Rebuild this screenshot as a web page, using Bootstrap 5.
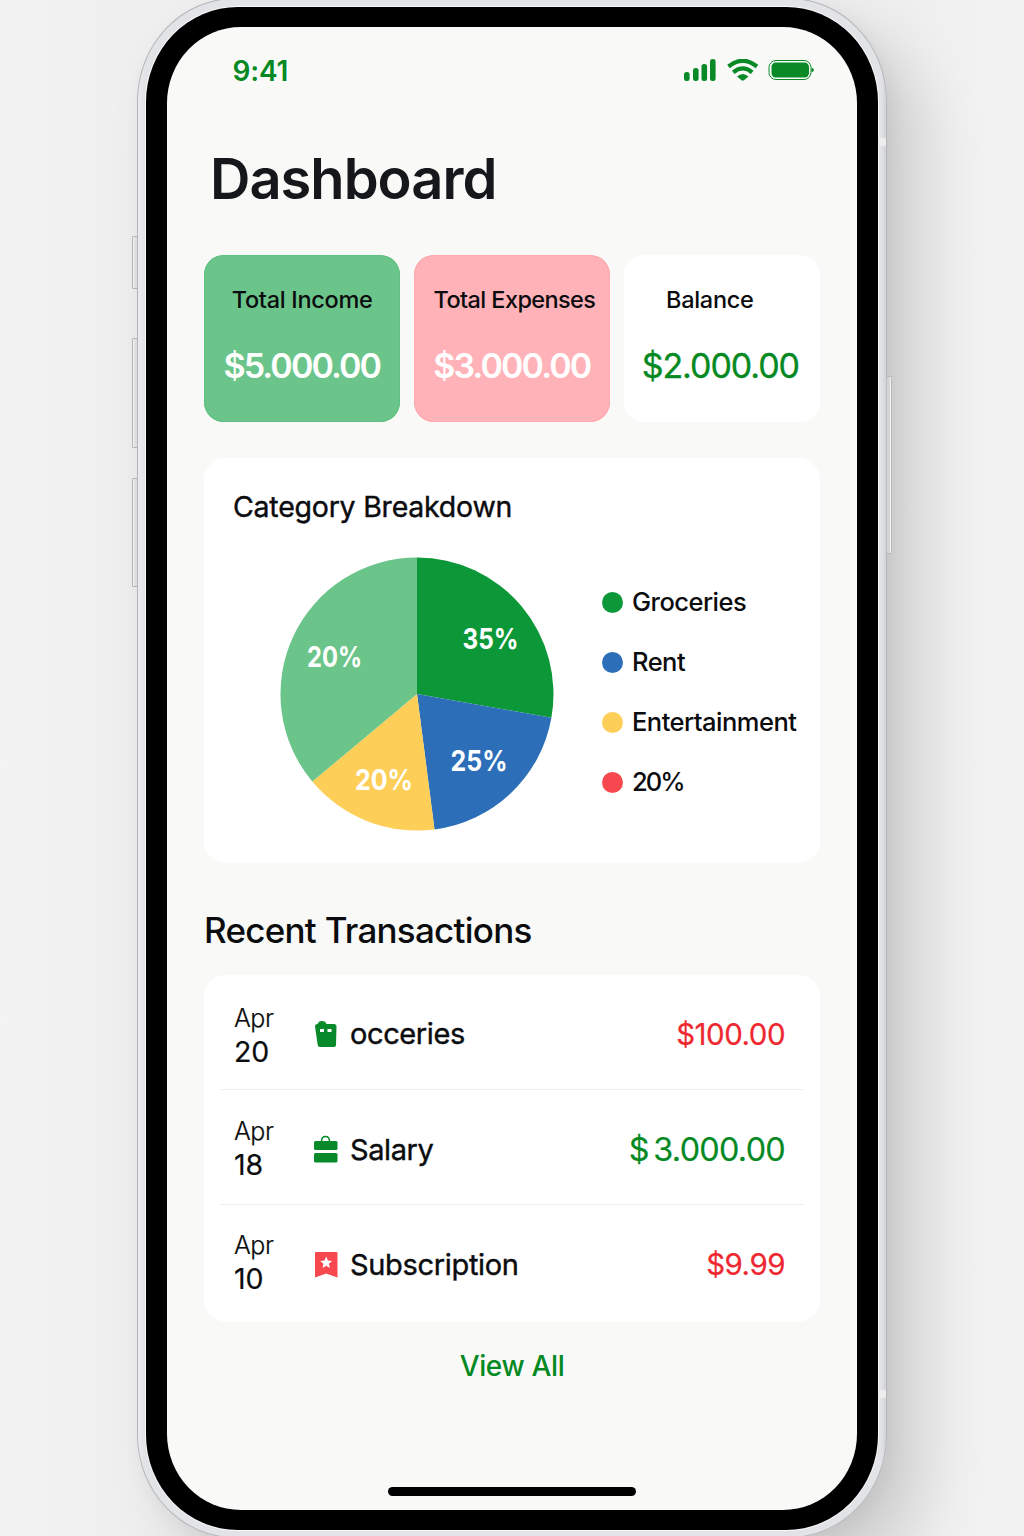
<!DOCTYPE html>
<html lang="en">
<head>
<meta charset="utf-8">
<meta name="viewport" content="width=device-width, initial-scale=1">
<title>Dashboard</title>
<link href="https://cdn.jsdelivr.net/npm/bootstrap@5.3.0/dist/css/bootstrap.min.css" rel="stylesheet">
<style>
  :root { --brand: #058923; --danger-ink: #ee2730; }
  body { width: 1024px; height: 1536px; font-family: Inter, "Liberation Sans", sans-serif; color: #0b0c0e;
    background: linear-gradient(90deg, #f3f3f3 0, #efefef 130px, #efefef 900px, #f3f3f3 100%); }
  .stage { height: 1536px; padding-left: 137px; }
  .phone { width: 750px; height: 1540px; margin-top: -2px; padding: 8px; border: 1px solid #b4b5b8;
    border-radius: 98px / 103px; background: linear-gradient(90deg, #ececee, #e2e3e6 7px, #e2e3e6 743px, #d3d4d7);
    box-shadow: 34px 34px 64px rgba(0,0,0,.15), 5px 6px 20px rgba(0,0,0,.05); }
  .bezel { height: 1523px; background: #000; border-radius: 92px / 95px; padding: 20px 21px; box-shadow: 0 0 0 1px #f8f8f9; }
  .screen { height: 1483px; border-radius: 74px / 76px; background: #f9faf8; padding: 0 37px; }
  .side-key { width: 6px; background: #e6e6e7; border: 1px solid #b9babb; border-radius: 1px; box-shadow: inset 1px 0 0 #f8f8f8; }
  .side-key.power { background: #d4d5d7; box-shadow: inset -1px 0 0 #f4f4f4; }
  .band { width: 8px; height: 8px; background: #eeeeef; }
  .status { height: 88.5px; padding: 0 5.5px 0 28.5px; }
  .clock { font-size: 28px; font-weight: 600; letter-spacing: -.2px; color: var(--brand); }
  .page-title { font-size: 56px; font-weight: 600; line-height: 68px; letter-spacing: -1px; color: #15171a; margin: 29.500px 0 42px 6px; }
  .stat { height: 167px; border-radius: 20px; padding-top: 29px; }
  .stat-label { font-size: 23.5px; font-weight: 500; line-height: 32px; letter-spacing: -.28px; }
  .stat-label.tight { letter-spacing: -.6px; padding-left: 5px; }
  .stat-sum { font-size: 34px; line-height: 44px; font-weight: 600; letter-spacing: -1.9px; margin-top: 28px; padding-left: 19.5px; }
  .stat-sum.plain { font-weight: 400; letter-spacing: -1.05px; padding-left: 18px; -webkit-text-stroke: .3px; }
  .panel { background: #fff; border-radius: 22px; }
  .stats { gap: 13.5px; }
  .income { background: #6bc58a; box-shadow: inset 0 0 0 1px #5fc181; }
  .expense { background: #ffb2b8; box-shadow: inset 0 0 0 1px #ffa8af; }
  .breakdown { height: 405.5px; margin-top: 35.5px; padding: 30px 20px 0 29px; }
  .breakdown-title { font-size: 28.5px; font-weight: 400; -webkit-text-stroke: .4px; line-height: 38px; letter-spacing: -.23px; margin: 0; }
  .pie { margin: 31px 0 0 47px; }
  .pie text { font-size: 28.5px; font-weight: 700; fill: #fff; }
  .legend-list { margin-top: 46.5px; width: 198px; }
  .legend-list li { height: 60px; gap: 9px; font-size: 25.5px; font-weight: 500; letter-spacing: -.52px; }
  .legend-list li:last-child { letter-spacing: -2px; }
  .dot { width: 21px; height: 21px; }
  .recent-title { font-size: 35px; font-weight: 500; line-height: 44px; letter-spacing: -.74px; margin: 45px 0 23px; }
  .entries { height: 346.5px; padding: 0 16px; }
  .entry { height: 115px; padding: 4px 19px 0 14px; border-bottom: 1.5px solid #eeeeee; }
  .entry:last-child { border: 0; }
  .entry-date { width: 79px; line-height: 33px; font-size: 28.5px; letter-spacing: -.2px; -webkit-text-stroke: .2px; padding-top: 1px; }
  .entry:nth-child(2) .entry-date { padding: 0 0 2px; }
  .entry:nth-child(3) .entry-date { padding: 0 0 6px; }
  .entry:nth-child(2) .entry-name, .entry:nth-child(2) .entry-sum { padding-top: 2px; }
  .entry-date small { font-size: 25px; font-weight: 300; display: block; letter-spacing: -.5px; }
  .entry-icon { width: 26px; height: 28px; }
  .entry-name { font-size: 29px; margin-left: 11px; -webkit-text-stroke: .4px; letter-spacing: -.4px; }
  .entry-name.long { letter-spacing: -.33px; }
  .entry-sum { font-size: 29.5px; letter-spacing: -.5px; -webkit-text-stroke: .2px; }
  .entry-sum.wide { font-size: 32.3px; letter-spacing: -.7px; }
  .ink-brand { color: var(--brand); } .ink-danger { color: var(--danger-ink); }
  .view-all { font-size: 28px; font-weight: 500; line-height: 38px; letter-spacing: -.35px; color: var(--brand); margin-top: 25px; }
  .home-bar { width: 248px; height: 9px; border-radius: 5px; background: #000; margin: 102px auto 0; }
</style>
</head>
<body>
<div class="stage position-relative overflow-hidden">
  <i class="side-key position-absolute" style="left:132px;top:236px;height:53px"></i>
  <i class="side-key position-absolute" style="left:132px;top:338px;height:110px"></i>
  <i class="side-key position-absolute" style="left:132px;top:478px;height:109px"></i>
  <div class="phone position-relative">
    <i class="band position-absolute" style="right:0;top:139px"></i>
    <i class="band position-absolute" style="right:0;top:1391px"></i>
    <div class="bezel">
      <main class="screen d-flex flex-column">
        <header class="status d-flex justify-content-between align-items-center">
          <span class="clock">9:41</span>
          <svg width="132" height="24" viewBox="0 0 132 24" fill="#0a8a27">
            <rect x="1" y="13" width="5.600" height="9" rx="2.500"/><rect x="10" y="9" width="5.600" height="13" rx="2.500"/>
            <rect x="18.500" y="5" width="5.600" height="17" rx="2.500"/><rect x="27" y="0" width="5.600" height="22" rx="2.500"/>
            <g fill="none" stroke="#0a8a27" stroke-width="4.200"><path d="M45.500 7.500Q59.700 -4 74 7.500"/><path d="M50.300 13.300Q59.700 5.500 69.200 13.300"/></g>
            <path d="M54 17.500Q59.700 12.500 65.500 17.500L61 21.300Q59.700 22.200 58.500 21.300Z"/>
            <rect x="86" y="1.500" width="42" height="19" rx="7" fill="none" stroke="#0a8a27"/>
            <rect x="88.500" y="3.500" width="37.500" height="15" rx="4.500"/><path d="M128.500 8.500q5 2.500 0 5z"/>
          </svg>
        </header>
        <h1 class="page-title">Dashboard</h1>
        <section class="stats d-flex">
          <div class="stat income flex-fill w-100"><div class="stat-label text-center">Total Income</div><div class="stat-sum text-white">$5.000.00</div></div>
          <div class="stat expense flex-fill w-100"><div class="stat-label tight text-nowrap text-center">Total Expenses</div><div class="stat-sum text-white">$3.000.00</div></div>
          <div class="stat bg-white flex-fill w-100"><div class="stat-label text-center pe-4">Balance</div><div class="stat-sum plain ink-brand">$2.000.00</div></div>
        </section>
        <section class="panel breakdown">
          <h2 class="breakdown-title">Category Breakdown</h2>
          <div class="d-flex justify-content-between align-items-start">
            <svg class="pie" width="274" height="274" viewBox="-137 -137 274 274">
              <path fill="#0c9838" d="M0 0V-136.500A136.500 136.500 0 0 1 134.400 23.700Z"/>
              <path fill="#2c6fb8" d="M0 0L134.400 23.700A136.500 136.500 0 0 1 17.500 135.400Z"/>
              <path fill="#fecf58" d="M0 0L17.500 135.400A136.500 136.500 0 0 1 -104.700 87.600Z"/>
              <path fill="#6bc58a" d="M0 0L-104.700 87.600A136.500 136.500 0 0 1 0 -136.500Z"/>
              <text x="45.500" y="-45" textLength="56" lengthAdjust="spacingAndGlyphs">35%</text>
              <text x="33.500" y="77" textLength="57" lengthAdjust="spacingAndGlyphs">25%</text>
              <text x="-62" y="96" textLength="58" lengthAdjust="spacingAndGlyphs">20%</text>
              <text x="-110" y="-27" textLength="55" lengthAdjust="spacingAndGlyphs">20%</text>
            </svg>
            <ul class="legend-list list-unstyled mb-0 text-nowrap flex-shrink-0">
              <li class="d-flex align-items-center"><i class="dot rounded-circle" style="background:#0c9838"></i>Groceries</li>
              <li class="d-flex align-items-center"><i class="dot rounded-circle" style="background:#2c6fb8"></i>Rent</li>
              <li class="d-flex align-items-center"><i class="dot rounded-circle" style="background:#fecf58"></i>Entertainment</li>
              <li class="d-flex align-items-center"><i class="dot rounded-circle" style="background:#f7484f"></i>20%</li>
            </ul>
          </div>
        </section>
        <h2 class="recent-title">Recent Transactions</h2>
        <section class="panel entries">
          <div class="entry d-flex align-items-center">
            <div class="entry-date"><small>Apr</small>20</div>
            <svg class="entry-icon" viewBox="0 0 26 28"><path fill="#088a2b" d="M2 6.500Q2 4 4.500 4Q5.500 1 9 1Q12.500 1 13.500 4H21Q23.500 4 23.500 6.500L23 25Q23 27 21 27H7Q5 27 4.700 25Z"/><path fill="#fff" d="M7 9h4v3H7zM14.500 9h4v3h-4z"/></svg>
            <span class="entry-name">occeries</span><span class="entry-sum ink-danger ms-auto">$100.00</span>
          </div>
          <div class="entry d-flex align-items-center">
            <div class="entry-date"><small>Apr</small>18</div>
            <svg class="entry-icon" viewBox="0 0 26 28"><g fill="#088a2b"><rect x="1" y="6" width="23.500" height="9" rx="1.500"/><rect x="1" y="18" width="23.500" height="9.500" rx="1.500"/></g><path fill="none" stroke="#088a2b" stroke-width="1.500" d="M8.500 6.500Q8.500 1.500 12.500 1.500T16.500 6.500"/></svg>
            <span class="entry-name">Salary</span><span class="entry-sum wide ink-brand ms-auto">$&#8198;3.000.00</span>
          </div>
          <div class="entry d-flex align-items-center">
            <div class="entry-date"><small>Apr</small>10</div>
            <svg class="entry-icon" viewBox="0 0 26 28"><path fill="#f7484f" d="M3 1H23.500Q24.500 1 24.500 2V26.500L13.200 22.500L2 26.500V2Q2 1 3 1Z"/><path fill="#fff" d="M13.200 5.500L14.900 9.600L19.200 9.900L15.900 12.700L16.900 17L13.200 14.700L9.500 17L10.500 12.700L7.200 9.900L11.500 9.600Z"/></svg>
            <span class="entry-name long">Subscription</span><span class="entry-sum ink-danger ms-auto">$9.99</span>
          </div>
        </section>
        <a class="view-all text-decoration-none text-center" href="#">View All</a>
        <div class="home-bar"></div>
      </main>
    </div>
  </div>
  <i class="side-key power position-absolute" style="left:886px;top:376px;height:178px"></i>
</div>
<script src="https://cdn.jsdelivr.net/npm/bootstrap@5.3.0/dist/js/bootstrap.bundle.min.js"></script>
</body>
</html>
